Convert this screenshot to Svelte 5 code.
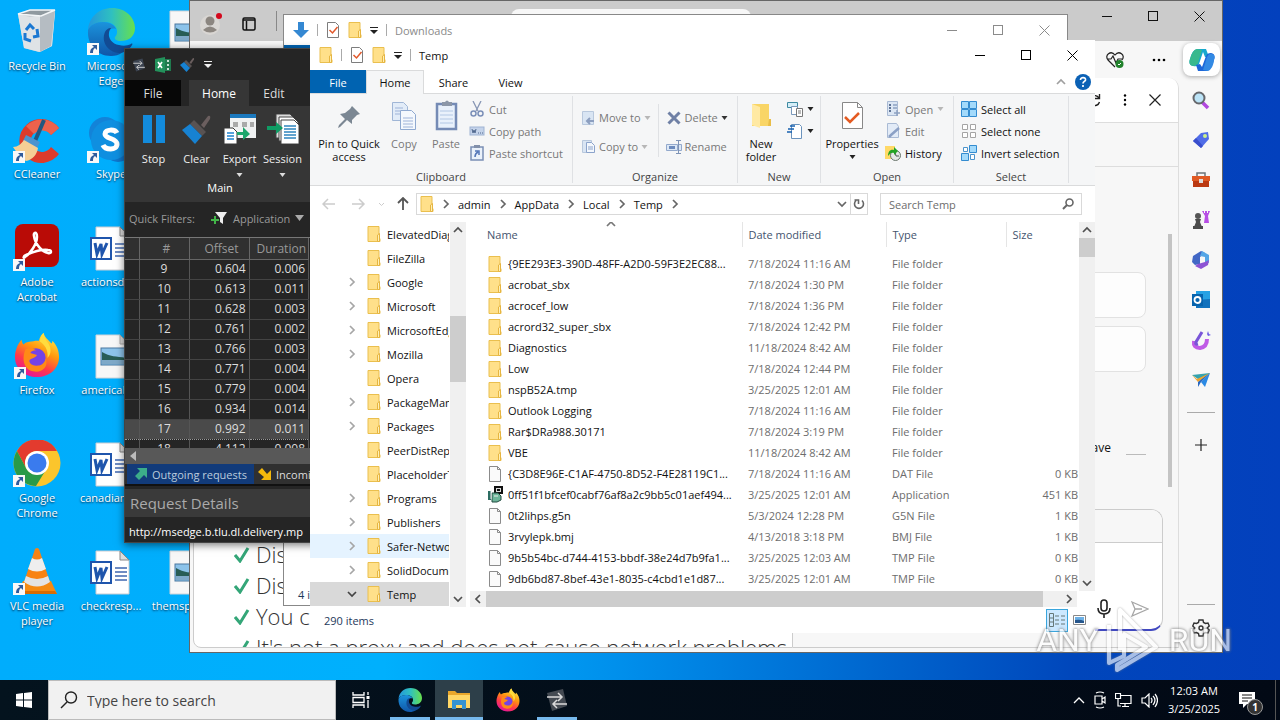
<script>
  const shortcuts = [
    { icon: 'bin', label: 'Recycle Bin', col: 1, row: 1 },
    { icon: 'ccleaner', label: 'CCleaner', col: 1, row: 2, link: true },
    { icon: 'acrobat', label: 'Adobe Acrobat', col: 1, row: 3, link: true },
    { icon: 'firefox', label: 'Firefox', col: 1, row: 4, link: true },
    { icon: 'chrome', label: 'Google Chrome', col: 1, row: 5, link: true },
    { icon: 'vlc', label: 'VLC media player', col: 1, row: 6, link: true },
    { icon: 'edge', label: 'Microsoft Edge', col: 2, row: 1, link: true },
    { icon: 'skype', label: 'Skype', col: 2, row: 2, link: true },
    { icon: 'word', label: 'actionsdis...', col: 2, row: 3 },
    { icon: 'image', label: 'americabl...', col: 2, row: 4 },
    { icon: 'word', label: 'canadiann...', col: 2, row: 5 },
    { icon: 'word', label: 'checkresp...', col: 2, row: 6 },
    { icon: 'image', label: '', col: 3, row: 1 },
    { icon: 'image', label: 'themspons...', col: 3, row: 6 }
  ];

  const requests = [
    [9, '0.604', '0.006'], [10, '0.613', '0.011'], [11, '0.628', '0.003'],
    [12, '0.761', '0.002'], [13, '0.766', '0.003'], [14, '0.771', '0.004'],
    [15, '0.779', '0.004'], [16, '0.934', '0.014'], [17, '0.992', '0.011'],
    [18, '4.112', '0.008']
  ];

  const tree = [
    ['ElevatedDiagnostics', 0], ['FileZilla', 0], ['Google', 1], ['Microsoft', 1],
    ['MicrosoftEdge', 1], ['Mozilla', 1], ['Opera', 0], ['PackageManagement', 1],
    ['Packages', 1], ['PeerDistRepub', 0], ['PlaceholderTile', 0], ['Programs', 1],
    ['Publishers', 1], ['Safer-Networking', 1], ['SolidDocuments', 1], ['Temp', 2]
  ];

  const files = [
    ['folder', '{9EE293E3-390D-48FF-A2D0-59F3E2EC88...', '7/18/2024 11:16 AM', 'File folder', ''],
    ['folder', 'acrobat_sbx', '7/18/2024 1:30 PM', 'File folder', ''],
    ['folder', 'acrocef_low', '7/18/2024 1:36 PM', 'File folder', ''],
    ['folder', 'acrord32_super_sbx', '7/18/2024 12:42 PM', 'File folder', ''],
    ['folder', 'Diagnostics', '11/18/2024 8:42 AM', 'File folder', ''],
    ['folder', 'Low', '7/18/2024 12:44 PM', 'File folder', ''],
    ['folder', 'nspB52A.tmp', '3/25/2025 12:01 AM', 'File folder', ''],
    ['folder', 'Outlook Logging', '7/18/2024 11:16 AM', 'File folder', ''],
    ['folder', 'Rar$DRa988.30171', '7/18/2024 3:19 PM', 'File folder', ''],
    ['folder', 'VBE', '11/18/2024 8:42 AM', 'File folder', ''],
    ['file', '{C3D8E96E-C1AF-4750-8D52-F4E28119C1...', '7/18/2024 11:16 AM', 'DAT File', '0 KB'],
    ['exe', '0ff51f1bfcef0cabf76af8a2c9bb5c01aef494...', '3/25/2025 12:01 AM', 'Application', '451 KB'],
    ['file', '0t2lihps.g5n', '5/3/2024 12:28 PM', 'G5N File', '1 KB'],
    ['file', '3rvylepk.bmj', '4/13/2018 3:18 PM', 'BMJ File', '1 KB'],
    ['file', '9b5b54bc-d744-4153-bbdf-38e24d7b9fa1...', '3/25/2025 12:03 AM', 'TMP File', '0 KB'],
    ['file', '9db6bd87-8bef-43e1-8035-c4cbd1e1d87...', '3/25/2025 12:01 AM', 'TMP File', '0 KB'],
    ['file', '', '', '', '']
  ];

  const crumbs = ['admin', 'AppData', 'Local', 'Temp'];
  const checks = ['Disa', 'Displ', 'You c', "It's not a proxy and does not cause network problems"];
  const sideTools = ['search', 'tag', 'toolbox', 'chess', 'office', 'outlook', 'designer', 'plane'];
</script>

{#snippet edgeLogo(size)}
  <svg width={size} height={size} viewBox="0 0 48 48" aria-hidden="true">
    <defs>
      <linearGradient id="eg1" x1="0" y1="0" x2="1" y2="0"><stop offset="0" stop-color="#2396dd" /><stop offset=".5" stop-color="#2fc0c0" /><stop offset="1" stop-color="#68e04c" /></linearGradient>
      <linearGradient id="eg2" x1="0" y1="0" x2="0" y2="1"><stop offset="0" stop-color="#1b93dc" /><stop offset="1" stop-color="#1056a8" /></linearGradient>
    </defs>
    <path d="M1 22C2 9 12 0 25 0c14 0 23 10 23 20 0 9-7 13-14 13-5 0-7-2-6-4 2-2 2-4 2-6 0-4-4-9-13-9C9 14 2 18 1 22z" fill="url(#eg1)" />
    <path d="M1 22c2-5 8-8 15-8 8 0 12 4 13 7-6-2-12 3-10 11 2 7 9 12 17 12-4 3-8 4-12 4C10 48 0 37 1 22z" fill="url(#eg2)" />
    <path d="M18 24c-4 9 2 20 14 21 6 0 11-4 13-8 1-1 0-2-1-1-4 2-8 2-12 1-7-1-11-7-10-12 0-3 2-4 2-5-3 0-5 2-6 4z" fill="#124b94" />
  </svg>
{/snippet}

{#snippet firefoxLogo(size)}
  <svg width={size} height={size} viewBox="0 0 48 48" aria-hidden="true">
    <defs>
      <linearGradient id="fx" x1=".8" y1="0" x2=".3" y2="1"><stop offset="0" stop-color="#fff04a" /><stop offset=".4" stop-color="#ff980e" /><stop offset=".7" stop-color="#ff3a4a" /><stop offset="1" stop-color="#e4149c" /></linearGradient>
    </defs>
    <path d="M3 16c1-3 3-6 5-8 0 2 1 4 2 5 2-2 5-3 8-3 3-1 6-1 8-1 1-4 3-7 5-8 1 5 5 7 8 11 1-1 1-2 1-3 5 5 7 11 7 17 0 12-10 21-23 21S1 38 1 26c0-4 1-7 2-10z" fill="url(#fx)" />
    <circle cx="23" cy="27" r="10" fill="#7543e5" />
    <path d="M12 18c4-2 8-1 11 1-3 0-5 1-6 3l7 2c-2 4-7 3-8 6 0 3 4 6 9 5 4 0 8-4 8-8 4 10-5 16-13 14-8-1-13-11-8-23z" fill="#ff8a16" />
    <path d="M27 10c5 3 9 9 8 17 4-4 4-10 1-15-3-4-5-7-5-11-2 2-4 5-4 9z" fill="#ffdc3e" />
  </svg>
{/snippet}

{#snippet desktopIcon(name)}
  {#if name === 'edge'}
    {@render edgeLogo(48)}
  {:else if name === 'firefox'}
    {@render firefoxLogo(46)}
  {:else}
    <svg width="48" height="48" viewBox="0 0 48 48" aria-hidden="true">
      {#if name === 'bin'}
        <path d="M5 6 16 2h26l-3 36-13 6-15-4z" fill="#c9d0d5" />
        <path d="m5 6 12 3 25-5-3 34-12 6-16-4z" fill="#dfe3e6" />
        <path d="m27 8 15-5-4 35-11 6z" fill="#b5bcc2" />
        <path d="M5 6 17 2h25L28 8z" fill="#8f999f" stroke="#f2f5f7" stroke-width="1.5" />
        <g fill="none" stroke="#1b78d2" stroke-width="3"><path d="m13 22 4-5 4 4" /><path d="m24 21 1 7-5 1" /><path d="M12 25v6l6 2" /></g>
      {:else if name === 'ccleaner'}
        <path d="M46 12A22 22 0 1 0 46 38l-8-7a11 11 0 1 1 0-12z" fill="#dc3b2c" />
        <path d="M46 12A22 22 0 0 0 13 10l8 8a11 11 0 0 1 17 1z" fill="#ee624c" />
        <path d="m31 4-9 21" stroke="#23577f" stroke-width="4" />
        <path d="m13 19 14 7-3 6-14-7z" fill="#4c94cf" />
        <path d="m11 24 14 8c-1 7-6 12-12 13C7 42 3 35 0 31c5 0 8-3 11-7z" fill="#f5cf95" />
      {:else if name === 'acrobat'}
        <rect x="2" y="0" width="44" height="43" rx="8" fill="#b90b06" />
        <path d="M12 33c5-3 12-13 12-20 0-6-4-5-3-1 1 8 8 16 14 17 4 1 4-3 0-3-7-1-15 2-22 5-3 1-3 4-1 2z" fill="none" stroke="#fff" stroke-width="2.5" />
      {:else if name === 'chrome'}
        <circle cx="24" cy="23" r="23.500" fill="#fbc52c" />
        <path d="M4 11a23 23 0 0 1 40 0H24a12 12 0 0 0-11 17z" fill="#e33b2e" />
        <path d="M4 11a23 23 0 0 0 19 35l11-18a12 12 0 0 1-21 0z" fill="#299a48" />
        <circle cx="24" cy="23" r="12" fill="#fff" /><circle cx="24" cy="23" r="9.500" fill="#3a7bee" />
      {:else if name === 'vlc'}
        <path d="m10 33-6 13h40l-6-13z" fill="#f58a12" /><path d="m4 46 2-3h36l2 3z" fill="#d76c03" />
        <path d="m22 1-11 33q13 9 26 0L26 1q-2-2-4 0z" fill="#f88313" />
        <path d="m19 10-4 11q9 5 18 0l-4-11q-5 3-10 0z" fill="#eee" /><path d="m13 28-2 6q13 9 26 0l-2-6q-11 6-22 0z" fill="#e4e4e4" />
      {:else if name === 'skype'}
        <circle cx="18" cy="17" r="16" fill="#1383d8" /><circle cx="31" cy="31" r="15" fill="#0f76cc" /><circle cx="24" cy="24" r="20" fill="#0f8fe0" />
        <path d="M30 17c-2-4-12-4-12 1s12 4 12 10c0 7-12 6-14 1" fill="none" stroke="#fff" stroke-width="5" />
      {:else if name === 'word'}
        <path d="M9 3h24l9 9v34H9z" fill="#fff" stroke="#c9ccd2" /><path d="M33 3v9h9z" fill="#ddd" stroke="#888" />
        <path d="M28 20h12M28 24h12M28 28h12M28 32h12" stroke="#3f67b0" stroke-width="1.5" />
        <rect x="4" y="14" width="20" height="21" fill="#fff" stroke="#1f55ac" stroke-width="2" />
        <path d="m8 19 2 11 4-10 1 10 5-11" fill="none" stroke="#1f55ac" stroke-width="3" />
      {:else}
        <path d="M9 3h24l9 9v34H9z" fill="#f7f7f7" stroke="#cfd3d8" /><path d="M33 3v9h9z" fill="#ddd" stroke="#aaa" />
        <rect x="14" y="16" width="26" height="17" fill="#8cc3ea" stroke="#4b78a0" />
        <path d="M15 20c8 5 14 4 24 6v6H15z" fill="#285d55" /><path d="M15 28h24v4H15z" fill="#7fa9c8" />
      {/if}
    </svg>
  {/if}
{/snippet}

{#snippet folder()}
  <svg width="14" height="16" viewBox="0 0 14 16" aria-hidden="true"><path d="M1 .5h11v11l1 1.500V15.500H1z" fill="#ffe08a" stroke="#eabf4e" /><path d="M10.500 15.500V9l2-1.500v8z" fill="#fff0b5" stroke="#e6b541" /></svg>
{/snippet}

{#snippet page()}
  <svg width="14" height="16" viewBox="0 0 14 16" aria-hidden="true"><path d="M1.500.5h8l3 3v12h-11z" fill="#fafafa" stroke="#8b8b8b" /><path d="M9.500.5v3h3" fill="none" stroke="#8b8b8b" /></svg>
{/snippet}

{#snippet checkPage()}
  <svg width="14" height="16" viewBox="0 0 14 16" aria-hidden="true"><path d="M1.500.5h8l3 3v12h-11z" fill="#fff" stroke="#7d7d7d" /><path d="m3.500 8 3 3 5-6" fill="none" stroke="#e2582a" stroke-width="1.500" /></svg>
{/snippet}

{#snippet caret(color)}
  <svg width="7" height="4" viewBox="0 0 7 4" aria-hidden="true"><path d="M.5 0h6l-3 4z" fill={color} /></svg>
{/snippet}

{#snippet chev(dir, color)}
  <svg width="10" height="10" viewBox="0 0 10 10" aria-hidden="true">
    <path d={dir === 'r' ? 'm3 1 4 4-4 4' : dir === 'l' ? 'M7 1 3 5l4 4' : dir === 'u' ? 'm1 7 4-4 4 4' : 'm1 3 4 4 4-4'} fill="none" stroke={color} stroke-width="1.700" />
  </svg>
{/snippet}

{#snippet customize(color)}
  <svg width="8" height="7" viewBox="0 0 8 7" aria-hidden="true"><path d="M0 .5h8" stroke={color} /><path d="M0 3h8L4 7z" fill={color} /></svg>
{/snippet}

{#snippet winButtons(color)}
  <div class="winbtns">
    <button aria-label="Minimize"><svg width="11" height="11"><path d="M0 5.500h10" stroke={color} /></svg></button>
    <button aria-label="Maximize"><svg width="11" height="11"><rect x=".5" y=".5" width="9" height="9" fill="none" stroke={color} /></svg></button>
    <button aria-label="Close"><svg width="11" height="11"><path d="m.5.5 10 10m0-10-10 10" stroke={color} /></svg></button>
  </div>
{/snippet}

{#snippet brush(size)}
  <svg width={size} height={size} viewBox="0 0 30 30" aria-hidden="true"><path d="m19 11 7-9q3-1 2 3l-6 9z" fill="#6b5f5f" /><path d="m12 6 12 12-4 4L8 10z" fill="#595353" /><path d="m8 10 12 12-7 8L0 16z" fill="#1782d2" /></svg>
{/snippet}

{#snippet swap(size, bg)}
  <svg width={size} height={size} viewBox="0 0 24 24" aria-hidden="true"><path d="m2 5 16-4 4 17-15 5z" fill={bg} /><path d="M2 9h15m-4-4 4 4-4 4M22 16H8m4-4-4 4 4 4" fill="none" stroke="#dadada" stroke-width="1.500" /></svg>
{/snippet}

{#snippet ribbonIcon(name)}
  <svg width="16" height="16" viewBox="0 0 16 16" aria-hidden="true">
    {#if name === 'cut'}
      <path d="M4 0l5 10M12 0 7 10" stroke="#8796b4" stroke-width="1.300" /><circle cx="4.500" cy="12.500" r="2.500" fill="none" stroke="#7b8fb8" stroke-width="1.500" /><circle cx="11.500" cy="12.500" r="2.500" fill="none" stroke="#7b8fb8" stroke-width="1.500" />
    {:else if name === 'path'}
      <rect x="1" y="4" width="14" height="8" fill="#c4d3ea" stroke="#9fb3d3" /><path d="m3 6 1 4 1-3 1 3 1-4m2 4h1m1 0h1m1 0h1" fill="none" stroke="#51698f" />
    {:else if name === 'shortcut'}
      <path d="M2 2h12v13H2z" fill="#eaf1fa" stroke="#7a8fb5" stroke-width="1.500" /><path d="M5 0h6v3H5z" fill="#8290aa" /><path d="M6 12c0-3 1-4 3-5M6 6h4v4" fill="none" stroke="#5376b8" stroke-width="1.500" />
    {:else if name === 'move'}
      <path d="M2.500 1.500h11v13h-11z" fill="#d9e5f3" stroke="#b8c8dd" /><path d="M14 11H7m3-3-3 3 3 3" fill="none" stroke="#8c9fc0" stroke-width="2" />
    {:else if name === 'copyto'}
      <path d="M2.500 1.500h9v12h-9z" fill="#d9e5f3" stroke="#b8c8dd" /><path d="M6.500 3.500h5l3 3v7h-8z" fill="#f4f8fd" stroke="#8ba3cb" /><path d="M8 8h5M8 10h5" stroke="#8ba3cb" />
    {:else if name === 'delete'}
      <path d="m2.500 2.500 11 11m0-11-11 11" stroke="#6f80a5" stroke-width="3" />
    {:else if name === 'rename'}
      <path d="M.5 5.500h11v6H.5zM13 5.500h2.500v6H13" fill="#dce8f6" stroke="#93a9cc" /><path d="M3 7h6v3H3z" fill="#6d8bbe" /><path d="M10 1.500h5M10 14.500h5M12.500 2v12" stroke="#7e93b6" />
    {:else if name === 'open'}
      <path d="M2.500.5h10v14h-10z" fill="#dbe6f4" stroke="#a9bad4" /><path d="M5 3v2m0 1v2m0 1v2" stroke="#5e7396" stroke-width="2" /><path d="M8 4h4M8 7h4M12 9v6m-3-3h6" stroke="#8da1c1" stroke-width="1.500" />
    {:else if name === 'edit'}
      <path d="M2.500.5h9l2 3v11h-11z" fill="#e2ebf7" stroke="#a9bad4" /><path d="m14 5-8 7-2 2" stroke="#8ba0c5" stroke-width="2.500" />
    {:else if name === 'history'}
      <path d="M0 1h10v13H0z" fill="#ffd967" /><circle cx="10.500" cy="10.500" r="5" fill="#e5e8e5" stroke="#69756c" /><path d="m10 7 1 4h3" fill="none" stroke="#4c5952" /><path d="M3 11c0-4 2-7 6-6V2l4 4-4 4V8c-3-1-4 1-6 3z" fill="#23a423" />
    {:else if name === 'all'}
      <path d="M.5.5h7v7h-7zM8.500.5h7v7h-7zM.5 8.500h7v7h-7zM8.500 8.500h7v7h-7z" fill="#a3dafb" stroke="#348cd0" />
    {:else if name === 'none'}
      <path d="M1.500 1.500h5v5h-5zM9.500 1.500h5v5h-5zM1.500 9.500h5v5h-5zM9.500 9.500h5v5h-5z" fill="#fff" stroke="#a4a4a4" />
    {:else if name === 'invert'}
      <path d="M8.500.5h7v7h-7zM.5 8.500h7v7h-7z" fill="#a3dafb" stroke="#348cd0" /><path d="M2.500 2.500h4v4h-4zM9.500 9.500h4v5h-4z" fill="#fff" stroke="#4b94cc" />
    {:else if name === 'newitem'}
      <path d="M.5 1.500h10v5H.5z" fill="#d5eef8" stroke="#3e8aa1" /><path d="M4.500 5.500h6v8h-6z" fill="#fff" stroke="#7a99bb" /><path d="M9.500 7.500h6v8h-6z" fill="#fff" stroke="#777" /><path d="M11 10h3m-3 2h3" stroke="#777" />
    {:else}
      <path d="M4.500 1.500h8l2 2v12h-10z" fill="#fff" stroke="#6b93bd" /><path d="M3 3h5M1 6h6M0 9h5" stroke="#1660b0" stroke-width="1.500" />
    {/if}
  </svg>
{/snippet}

{#snippet sideIcon(name)}
  <svg width="20" height="20" viewBox="0 0 20 20" aria-hidden="true">
    {#if name === 'search'}
      <path d="m11 12 6 6" stroke="#b148df" stroke-width="3.500" /><circle cx="8" cy="8" r="5.500" fill="#bce4f7" stroke="#66686c" stroke-width="2" />
    {:else if name === 'tag'}
      <path d="m2 11 8-8 7-1 1 7-8 9z" fill="#506de8" /><path d="m2 11 3-3 7 8-2 2z" fill="#394ecc" /><circle cx="14" cy="6" r="2" fill="#cdf08a" />
    {:else if name === 'toolbox'}
      <path d="M6 6V3h8v3" fill="none" stroke="#6c7479" stroke-width="1.500" /><path d="M1 6h18v5H1z" fill="#e05a24" /><path d="M2 11h16v6H2z" fill="#bb3912" /><path d="M8 9h4v4H8z" fill="#ddd" />
    {:else if name === 'chess'}
      <path d="M11 1h2v2h1V1h2v2h1V1h2l-2 5 1 7h-5l1-7z" fill="#b74de5" /><circle cx="7" cy="6" r="3" fill="#555" /><path d="M4 9h6l-1 3 2 5H3l2-5zM2 16h10v3H2z" fill="#4b4b4b" />
    {:else if name === 'office'}
      <path d="m2 6 8-5 4 2-5 4v7l-5 1-3-3z" fill="#4267c5" /><path d="m11 1 7 4v8l-4-1V7L9 6z" fill="#55a6e6" /><path d="m18 10-1 5-7 4-6-3 3-2 7-2z" fill="#8d53d4" />
    {:else if name === 'outlook'}
      <path d="M5 1h14v17H5z" fill="#26a1e4" /><path d="m5 10 14-1v9H5z" fill="#1272bd" /><path d="M1 4h11v12H1z" fill="#0763ad" /><circle cx="6.500" cy="10" r="3" fill="none" stroke="#fff" stroke-width="1.800" />
    {:else if name === 'designer'}
      <path d="M3 11q-1 7 6 7 7-1 7-9" fill="none" stroke="#c05be6" stroke-width="4" /><path d="M11 2 5 12q-1 3 2 2" stroke="#7a55d8" stroke-width="3" fill="none" /><path d="m17 1 1 3 2 1-3 1-1-2z" fill="#705fe5" />
    {:else}
      <path d="m1 5 18-2-9 8z" fill="#35a3ae" /><path d="m1 5 5 4 13-6-12 9z" fill="#efa22f" /><path d="m19 3-5 14-4-5z" fill="#2b8ae4" /><path d="m7 12 12-9-9 9-3 5z" fill="#2868c2" />
    {/if}
  </svg>
{/snippet}

<main class="screen">
  <section class="desktop" aria-label="Desktop">
    <div class="shortcuts">
      {#each shortcuts as s}
        <a href="#open" class="shortcut" aria-label={s.label || 'Picture'} style:grid-column={s.col} style:grid-row={s.row}>
          <span class="pic">
            {@render desktopIcon(s.icon)}
            {#if s.link}
              <svg class="arrow" width="12" height="12" viewBox="0 0 12 12" aria-hidden="true"><path d="M0 0h12v12H0z" fill="#f8f8f8" /><path d="M3 10c0-3 1-5 4-6L5 2h5v5L8 5c-2 1-2 3-2 5z" fill="#2f5b9c" /></svg>
            {/if}
          </span>
          <span>{s.label}</span>
        </a>
      {/each}
    </div>

    <section class="window edge" aria-label="Browser">
      <header class="edge-title">
        <svg width="22" height="22" viewBox="0 0 22 22" aria-hidden="true"><circle cx="10" cy="12" r="10" fill="#d9d6d3" /><circle cx="10" cy="8" r="4.500" fill="#8c8680" /><path d="M3 17q7-7 14 0-7 5-14 0z" fill="#8c8680" /><circle cx="19" cy="3" r="3" fill="#d4081c" /></svg>
        <svg width="14" height="14" viewBox="0 0 14 14" aria-hidden="true"><rect x="1" y="1" width="12" height="12" rx="1.500" fill="none" stroke="#111" stroke-width="1.500" /><path d="M1 3h12M4.500 4v9" stroke="#111" stroke-width="1.500" /></svg>
        <i class="tab-line"></i>
        <div class="edge-tab"></div>
        {@render winButtons('#111')}
      </header>
      <div class="edge-bar">
        <svg width="19" height="18" viewBox="0 0 19 18" aria-hidden="true"><path d="M9 16 2 9C-2 4 5-1 9 4c4-5 11 0 7 5M1 8h4l2-3 3 7 2-4h4" fill="none" stroke="#222" stroke-width="1.200" /><circle cx="13.500" cy="13" r="4" fill="#21822c" /><path d="m12 13 1 1 2-2" stroke="#fff" fill="none" /></svg>
        <svg width="14" height="4" aria-hidden="true"><circle cx="2" cy="2" r="1.300" /><circle cx="7" cy="2" r="1.300" /><circle cx="12" cy="2" r="1.300" /></svg>
        <button class="copilot" aria-label="Copilot">
          <svg width="26" height="24" viewBox="0 0 26 24" aria-hidden="true"><path d="M8 1h9l3 8h-4l-2-5-4 12q-1 3-6 2-5-1-3-7 2-9 7-10z" fill="#17a8cf" /><path d="M1 11Q4 1 8 1l5 1-4 13q-1 3-5 3-5-1-3-7z" fill="#39b98e" /><path d="M18 23H9l-2-6 4-1 2 3 4-11q1-3 5-3 5 1 3 7-2 9-7 11z" fill="#1d67d8" /><path d="M25 12q-1 9-6 11l-5-1 4-13q2-4 5-3 4 1 2 6z" fill="#338ae4" /></svg>
        </button>
      </div>
      <div class="edge-body">
        <div class="webpage">
          <ul>
            {#each checks as c}
              <li><svg width="16" height="16" viewBox="0 0 16 16" aria-hidden="true"><path d="m1 8 5 6L14 1" fill="none" stroke="#34a678" stroke-width="3" /></svg>{c}</li>
            {/each}
          </ul>
        </div>
        <aside class="panel">
          <div class="panel-head">
            <svg width="13" height="13" viewBox="0 0 13 13" aria-hidden="true"><path d="M11 4A5 5 0 1 0 11.500 8M11.500 0v4.500H7" fill="none" stroke="#222" stroke-width="1.400" /></svg>
            <svg width="4" height="12" aria-hidden="true"><circle cx="2" cy="1.500" r="1.200" /><circle cx="2" cy="6" r="1.200" /><circle cx="2" cy="10.500" r="1.200" /></svg>
            <svg width="12" height="12" aria-hidden="true"><path d="m.5.5 11 11m0-11-11 11" stroke="#222" stroke-width="1.200" /></svg>
          </div>
          <div class="panel-band"></div>
          <div class="panel-main">
            <div class="card"></div>
            <div class="card"></div>
            <p>save <i></i></p>
            <div class="compose">
              <div class="compose-top"></div>
              <div class="compose-row">
                <svg width="14" height="20" viewBox="0 0 14 20" aria-hidden="true"><rect x="4" y="1" width="6" height="11" rx="3" fill="none" stroke="#222" stroke-width="1.600" /><path d="M1 9q0 6 6 6t6-6M7 15v4" fill="none" stroke="#222" stroke-width="1.600" /></svg>
                <svg width="18" height="16" viewBox="0 0 18 16" aria-hidden="true"><path d="m1 1 16 7-16 7 3-7zM4 8h7" fill="none" stroke="#a6a6a6" stroke-width="1.300" /></svg>
              </div>
            </div>
            <i class="panel-scroll"></i>
          </div>
        </aside>
        <nav class="side" aria-label="Sidebar">
          {#each sideTools as t}
            <button aria-label={t}>{@render sideIcon(t)}</button>
          {/each}
          <hr />
          <button aria-label="Add"><svg width="12" height="12" aria-hidden="true"><path d="M6 0v12M0 6h12" stroke="#222" stroke-width="1.200" /></svg></button>
          <hr class="push" />
          <button aria-label="Settings"><svg width="18" height="18" viewBox="0 0 18 18" aria-hidden="true"><path d="m7 1-.5 2.500L4.500 4.500 2 4 .8 7l2 2-2 2L2 14l2.500-.5 2 1L7 17h4l.5-2.500 2-1L16 14l1.200-3-2-2 2-2L16 4l-2.500.5-2-1L11 1z" fill="none" stroke="#333" stroke-width="1.400" /><circle cx="9" cy="9" r="2" fill="none" stroke="#333" stroke-width="1.400" /></svg></button>
        </nav>
      </div>
    </section>

    <section class="window downloads" aria-label="Downloads">
      <header class="titlebar">
        <svg width="16" height="18" viewBox="0 0 16 18" aria-hidden="true"><path d="M5 1h6v8h5l-8 8-8-8h5z" fill="#3488d2" /></svg>
        <i></i>{@render checkPage()}{@render folder()}{@render customize('#222')}<i></i>
        <span>Downloads</span>
        {@render winButtons('#8b8b8b')}
      </header>
      <div class="dl-file"></div>
      <footer>4 i</footer>
    </section>

    <section class="window debugger" aria-label="HTTP Debugger">
      <header class="dbg-title">
        {@render swap(14, '#3b4350')}
        <svg width="16" height="16" viewBox="0 0 16 16" aria-hidden="true"><path d="M0 2 10 0v16L0 14z" fill="#23915b" /><path d="M10 2h6v12h-6z" fill="#207a4e" /><path d="m3 5 4 6m0-6-4 6M12 4h2m-2 4h2m-2 4h2" stroke="#fff" stroke-width="1.600" /></svg>
        {@render brush(15)}
        {@render customize('#eee')}
      </header>
      <nav class="dbg-tabs"><button class="file">File</button><button class="on">Home</button><button>Edit</button></nav>
      <div class="dbg-ribbon">
        <div class="dbg-tools">
          <button><svg width="30" height="30" aria-hidden="true"><path d="M4 1h9v28H4zM17 1h9v28h-9z" fill="#138bdc" /></svg>Stop</button>
          <button>{@render brush(30)}Clear</button>
          <button><svg width="32" height="30" viewBox="0 0 32 30" aria-hidden="true"><path d="M6 0h26v24H6z" fill="#f0f1f2" /><path d="M6 0h26v4H6z" fill="#1b78bd" /><path d="M9 8h5v5H9zm9 0h5v5h-5zm8 0h4v5h-4z" fill="#aaa" /><path d="M0 14h9l4 4v12H0z" fill="#fff" stroke="#363636" /><path d="M3 19h7M3 22h7M3 25h7" stroke="#1f82cf" stroke-width="1.500" /><path d="M13 18h6v-5l7 7-7 6v-5h-6z" fill="#1ca66b" /></svg>Export{@render caret('#ddd')}</button>
          <button><svg width="32" height="30" viewBox="0 0 32 30" aria-hidden="true"><path d="M9 0h14l6 6v18H9z" fill="#ddd" stroke="#444" /><path d="M12 3h14l5 5v19H12z" fill="#fff" stroke="#444" /><path d="M14 6h13l5 5v19H14z" fill="#fff" stroke="#444" /><path d="M17 12h12M17 15h12M17 18h12M17 21h12M17 24h12" stroke="#2f85bf" stroke-width="1.500" /><path d="M0 12h9V8l7 6-7 6v-4H0z" fill="#0f9c64" /></svg>Session{@render caret('#ddd')}</button>
        </div>
        <p>Main</p>
      </div>
      <div class="dbg-filter"><span>Quick Filters:</span><svg width="17" height="14" viewBox="0 0 17 14" aria-hidden="true"><path d="M4 1h12l-4 6v6l-3-2V7z" fill="#eee" /><path d="M0 9h8M4 5v8" stroke="#42b548" stroke-width="2" /></svg><span>Application</span><svg width="9" height="6" aria-hidden="true"><path d="M0 0h9L4.500 6z" fill="#aaa" /></svg></div>
      <div class="dbg-scroll">
        <table class="dbg-table">
          <thead><tr><th aria-label="Marker"></th><th>#</th><th>Offset</th><th>Duration</th></tr></thead>
          <tbody>
            {#each requests as r}
              <tr class:sel={r[0] === 17}><td></td><td>{r[0]}</td><td>{r[1]}</td><td>{r[2]}</td></tr>
            {/each}
          </tbody>
        </table>
      </div>
      <div class="dbg-hscroll"><svg width="6" height="10" aria-hidden="true"><path d="M6 0v10L0 5z" fill="#bbb" /></svg></div>
      <div class="dbg-bottom-tabs">
        <button class="on"><svg width="13" height="12" viewBox="0 0 13 12" aria-hidden="true"><path d="M3 0h10v10L10 7l-5 5-4-4 5-5z" fill="#3cad89" /></svg>Outgoing requests</button>
        <button><svg width="13" height="12" viewBox="0 0 13 12" aria-hidden="true"><path d="M13 12H3l3-3-6-5 4-4 5 6 4-4z" fill="#f5b90c" /></svg>Incoming</button>
      </div>
      <h2>Request Details</h2>
      <p class="url">http://msedge.b.tlu.dl.delivery.mp</p>
    </section>

    <section class="window explorer" aria-label="Temp">
      <header class="titlebar">
        {@render folder()}<i></i>{@render checkPage()}{@render folder()}{@render customize('#222')}<i></i>
        <span>Temp</span>
        {@render winButtons('#000')}
      </header>
      <nav class="tabs">
        <button class="file">File</button><button class="on">Home</button><button>Share</button><button>View</button>
        <span class="tabs-end">{@render chev('u', '#a0a0a0')}
          <svg width="16" height="16" viewBox="0 0 16 16" aria-label="Help"><circle cx="8" cy="8" r="8" fill="#0b61b5" /><path d="M5.500 6c0-3.500 5.500-3 5 0-.3 1.500-2.500 1.500-2.500 3.500M8 11v2" fill="none" stroke="#fff" stroke-width="1.700" /></svg>
        </span>
      </nav>
      <div class="ribbon">
        <div class="group">
          <div class="tools">
            <button class="big pin"><svg width="32" height="32" viewBox="0 0 32 32" aria-hidden="true"><path d="m19 6 8 8-3 1-5 5v4l-5-4-7 7-2 1 1-3 6-6-5-5 5-1 5-4z" fill="#7b8793" /></svg>Pin to Quick access</button>
            <button class="big off copy"><svg width="32" height="32" viewBox="0 0 32 32" aria-hidden="true"><path d="M4.500 2.500h11l4 4v14h-15z" fill="#e2ecf8" stroke="#a0b6d6" /><path d="M12.500 10.500h11l4 4v15h-15z" fill="#f4f8fd" stroke="#8fa9d0" /><path d="M7 8h8M7 11h5M7 14h5M15 18h10M15 21h10M15 24h10M15 27h10" stroke="#9eb3d8" /></svg>Copy</button>
            <button class="big off paste"><svg width="32" height="32" viewBox="0 0 32 32" aria-hidden="true"><path d="M7 4h19v25H7z" fill="#e9f1fb" stroke="#758bb5" stroke-width="2.500" /><path d="M12 2h3q2-3 4 0h3v4H12z" fill="#8c97a8" /><path d="M10 11h13M10 15h13M10 19h13M10 23h13" stroke="#b2c7e4" /></svg>Paste</button>
            <div class="stack off">
              <button>{@render ribbonIcon('cut')}Cut</button><button>{@render ribbonIcon('path')}Copy path</button><button>{@render ribbonIcon('shortcut')}Paste shortcut</button>
            </div>
          </div>
          <p>Clipboard</p>
        </div>
        <div class="group">
          <div class="tools organize off">
            <div class="stack wide"><button>{@render ribbonIcon('move')}Move to {@render caret('#b7b7b7')}</button><button>{@render ribbonIcon('copyto')}Copy to {@render caret('#b7b7b7')}</button></div>
            <i class="rule"></i>
            <div class="stack wide"><button>{@render ribbonIcon('delete')}Delete {@render caret('#333')}</button><button>{@render ribbonIcon('rename')}Rename</button></div>
          </div>
          <p>Organize</p>
        </div>
        <div class="group">
          <div class="tools">
            <button class="big newf"><svg width="32" height="32" viewBox="0 0 32 32" aria-hidden="true"><path d="M7 4h17v22H7z" fill="#f9d566" /><path d="m7 4 8 3v21l-8-3z" fill="#ffe9a3" /><path d="M24 19h2v7h-3z" fill="#e9bd47" /></svg>New folder</button>
            <div class="stack"><button aria-label="New item">{@render ribbonIcon('newitem')}{@render caret('#222')}</button><button aria-label="Easy access">{@render ribbonIcon('easy')}{@render caret('#222')}</button></div>
          </div>
          <p>New</p>
        </div>
        <div class="group">
          <div class="tools">
            <button class="big props"><svg width="32" height="32" viewBox="0 0 32 32" aria-hidden="true"><path d="M6.500 2.500h15l5 5v21h-20z" fill="#fff" stroke="#888" /><path d="M21.500 2.500v5h5" fill="none" stroke="#888" /><path d="m9 17 5 5 9-9" fill="none" stroke="#e45b22" stroke-width="2.500" /></svg>Properties{@render caret('#222')}</button>
            <div class="stack">
              <button class="off">{@render ribbonIcon('open')}Open {@render caret('#b7b7b7')}</button><button class="off">{@render ribbonIcon('edit')}Edit</button><button>{@render ribbonIcon('history')}History</button>
            </div>
          </div>
          <p>Open</p>
        </div>
        <div class="group">
          <div class="tools select">
            <div class="stack"><button>{@render ribbonIcon('all')}Select all</button><button>{@render ribbonIcon('none')}Select none</button><button>{@render ribbonIcon('invert')}Invert selection</button></div>
          </div>
          <p>Select</p>
        </div>
      </div>
      <div class="address">
        <div class="navs">
          <svg width="14" height="12" aria-label="Back"><path d="M13 6H1m5-5L1 6l5 5" fill="none" stroke="#ccc" stroke-width="1.500" /></svg>
          <svg width="14" height="12" aria-label="Forward"><path d="M0 6h12M7 1l5 5-5 5" fill="none" stroke="#ccc" stroke-width="1.500" /></svg>
          <svg width="7" height="5" aria-hidden="true"><path d="m1 1 2.500 2.500L6 1" fill="none" stroke="#ccc" /></svg>
          <svg width="12" height="14" aria-label="Up"><path d="M6 13V1M1 6l5-5 5 5" fill="none" stroke="#555" stroke-width="1.800" /></svg>
        </div>
        <div class="crumbs">
          {@render folder()}
          {#each crumbs as c}<span class="sep">{@render chev('r', '#666')}</span><span>{c}</span>{/each}
          <span class="sep">{@render chev('r', '#666')}</span>
          <span class="drop">{@render chev('d', '#666')}</span>
          <button aria-label="Refresh"><svg width="12" height="12" viewBox="0 0 12 12" aria-hidden="true"><path d="M9 2.500A4.500 4.500 0 1 1 3 2.500M1.500 2h4v4" fill="none" stroke="#666" stroke-width="1.600" /></svg></button>
        </div>
        <label class="find"><input type="text" aria-label="Search Temp" placeholder="Search Temp" /><svg width="12" height="12" viewBox="0 0 12 12" aria-hidden="true"><circle cx="7.500" cy="4.500" r="3.500" fill="none" stroke="#666" stroke-width="1.600" /><path d="M5 7 1 11" stroke="#666" stroke-width="2" /></svg></label>
      </div>
      <div class="main">
        <ul class="tree">
          {#each tree as t}
            <li class:hover={t[0] === 'Safer-Networking'} class:current={t[1] === 2}>
              <span class="tw">{#if t[1] === 1}{@render chev('r', '#a6a6a6')}{:else if t[1] === 2}{@render chev('d', '#444')}{/if}</span>
              {@render folder()}<span>{t[0]}</span>
            </li>
          {/each}
        </ul>
        <div class="vscroll nav-scroll"><span>{@render chev('u', '#505050')}</span><i></i><span>{@render chev('d', '#505050')}</span></div>
        <div class="content">
          <div class="list">
            <div class="rows">
              <table>
                <thead><tr><th>Name<span class="sort">{@render chev('u', '#777')}</span></th><th>Date modified</th><th>Type</th><th>Size</th></tr></thead>
                <tbody>
                  {#each files as f}
                    <tr>
                      <td><span class="fname">
                        {#if f[0] === 'folder'}{@render folder()}{:else if f[0] === 'file'}{@render page()}{:else}
                          <svg width="16" height="17" viewBox="0 0 16 17" aria-hidden="true"><path d="M6 0h9v8H6z" fill="#111" /><path d="M8 2h5v4H8z" fill="#ddd" /><path d="M9 3h3v2H9z" fill="#111" /><path d="M0 5h3v9H0z" fill="#2c6d62" /><path d="M4 7h6l3 3v4l-4 2H4z" fill="#6eb59a" stroke="#234d42" /><path d="M3 4v9M6 10h4" stroke="#eee" /></svg>
                        {/if}{f[1]}</span></td>
                      <td>{f[2]}</td><td>{f[3]}</td><td>{f[4]}</td>
                    </tr>
                  {/each}
                </tbody>
              </table>
            </div>
            <div class="vscroll list-scroll"><span>{@render chev('u', '#505050')}</span><i></i><span>{@render chev('d', '#505050')}</span></div>
          </div>
          <div class="hscroll"><span>{@render chev('l', '#505050')}</span><i></i><span>{@render chev('r', '#505050')}</span></div>
        </div>
      </div>
      <footer class="status"><span>290 items</span>
        <button class="view on" aria-label="Details view"><svg width="18" height="14" viewBox="0 0 18 14" aria-hidden="true"><path d="M1.500.5h4v13h-4zM2 5h3M2 9h3M7 3h4m2 0h4M7 7h4m2 0h4M7 11h4m2 0h4" fill="none" stroke="#677" /></svg></button>
        <button class="view" aria-label="Thumbnail view"><svg width="13" height="10" viewBox="0 0 13 10" aria-hidden="true"><path d="M.5.5h12v9H.5z" fill="#fff" stroke="#888" /><path d="M2 2h9v6H2z" fill="#6db1e7" /><path d="M2 5q5-1 9 1v2H2z" fill="#26568c" /></svg></button>
      </footer>
    </section>

    <div class="mark"><span>ANY</span>
      <svg width="56" height="66" viewBox="0 0 56 66" aria-hidden="true"><path d="M3 18v38l15-7V27l22 13-29 18v5l39-23L14 3v40" fill="none" stroke="#fff" stroke-width="4" stroke-linejoin="round" /></svg>
      <span>RUN</span>
    </div>
  </section>

  <footer class="taskbar">
    <button class="start" aria-label="Start"><svg width="16" height="16" viewBox="0 0 16 16" aria-hidden="true"><path d="m0 2 7-1v6.500H0zM8 1l8-1v7.500H8zM0 8.500h7V15l-7-1zM8 8.500h8V16l-8-1z" fill="#fff" /></svg></button>
    <label class="search"><svg width="18" height="18" viewBox="0 0 18 18" aria-hidden="true"><circle cx="11" cy="6.500" r="5.500" fill="none" stroke="#222" stroke-width="1.400" /><path d="m7 11-6 6" stroke="#222" stroke-width="1.400" /></svg><input type="text" aria-label="Type here to search" placeholder="Type here to search" /></label>
    <button class="app" aria-label="Task view"><svg width="18" height="16" viewBox="0 0 18 16" aria-hidden="true"><path d="M1 0v3h11V0M1 5.500h11v5H1zM1 16v-3h11v3M16 0v3m0 5v8" fill="none" stroke="#fff" stroke-width="1.300" /><path d="M14.500 4h3v3h-3z" fill="#fff" /></svg></button>
    <button class="app run" aria-label="Edge">{@render edgeLogo(24)}</button>
    <button class="app run active" aria-label="File Explorer"><svg width="22" height="20" viewBox="0 0 22 20" aria-hidden="true"><path d="M0 1h7l2 2h13v15H0z" fill="#e9a72c" /><path d="M0 5h22v13H0z" fill="#ffd766" /><path d="M4 10h14v9h-4v-4H8v4H4z" fill="#3593d2" /></svg></button>
    <button class="app" aria-label="Firefox">{@render firefoxLogo(24)}</button>
    <button class="app run" aria-label="HTTP Debugger">{@render swap(24, '#444a52')}</button>
    <div class="tray">
      <svg width="12" height="8" aria-hidden="true"><path d="m1 7 5-5 5 5" fill="none" stroke="#fff" stroke-width="1.300" /></svg>
      <svg width="12" height="18" viewBox="0 0 12 18" aria-hidden="true"><path d="M1 5h7v8H1zM8 8l3-2v6l-3-2M2 2q4-2 8 0M2 16q4 2 8 0" fill="none" stroke="#fff" stroke-width="1.200" /></svg>
      <svg width="17" height="15" viewBox="0 0 17 15" aria-hidden="true"><path d="M5 2.500h11v8H5M10 11v3M7 13.500h7M.5.5h5v5h-5zM3 6v7h3" fill="none" stroke="#fff" stroke-width="1.200" /></svg>
      <svg width="17" height="15" viewBox="0 0 17 15" aria-hidden="true"><path d="M1 5h3l4-4v13l-4-4H1zM10 5q2 2 0 5M12 3q4 4 0 9M14 1q5 6 0 13" fill="none" stroke="#fff" stroke-width="1.200" /></svg>
      <div class="clock"><span>12:03 AM</span><span>3/25/2025</span></div>
      <div class="note"><svg width="16" height="16" viewBox="0 0 16 16" aria-hidden="true"><path d="M0 0h16v12H8l-4 4v-4H0z" fill="#fff" /><path d="M3 3h10M3 6h10M3 9h6" stroke="#111" /></svg><b>1</b></div>
    </div>
  </footer>
</main>

<style>
  :global(body) { margin: 0; }
  * { box-sizing: border-box; }
  .screen { height: 100vh; display: flex; flex-direction: column; font: 11px/15px "Open Sans", "Noto Sans", sans-serif; color: #111; overflow: hidden; }
  svg { display: block; flex: none; }
  button { font: inherit; color: inherit; background: none; border: 0; padding: 0; margin: 0; display: flex; align-items: center; justify-content: center; }
  input { font: inherit; border: 0; background: none; outline: 0; padding: 0; min-width: 0; flex: 1; }
  p, h2, ul { margin: 0; padding: 0; list-style: none; }
  table { border-collapse: collapse; table-layout: fixed; }
  th, td { padding: 0; font-weight: 400; text-align: left; white-space: nowrap; }

  .desktop { position: relative; flex: 1; overflow: hidden; background: linear-gradient(90deg, #00adfc 0%, #00b0fd 30%, #0090ec 48%, #0067cf 68%, #0046bb 84%, #0340bd 100%); }
  .shortcuts { display: grid; grid-template-columns: repeat(3, 74px); grid-auto-rows: 108px; }
  .shortcut { display: flex; flex-direction: column; align-items: center; gap: 2px; padding-top: 8px; color: #fff; text-align: center; text-decoration: none; text-shadow: 0 1px 2px #024; }
  .pic { position: relative; height: 48px; }
  .arrow { position: absolute; left: 0; bottom: 1px; }

  .window { position: absolute; display: flex; flex-direction: column; overflow: hidden; }
  .winbtns { display: flex; margin-left: auto; }
  .winbtns button { width: 46px; height: 30px; }

  .edge { left: 189px; top: 0; right: 57px; bottom: 27px; background: #f7f7f7; border: 1px solid #666; }
  .edge-title { height: 40px; background: #cbcbcb; display: flex; align-items: center; gap: 20px; padding-left: 10px; flex: none; }
  .edge-title > svg { margin-top: 6px; }
  .tab-line { width: 1px; height: 20px; background: #888; }
  .edge-tab { align-self: flex-end; width: 240px; height: 32px; margin-left: 214px; border-radius: 8px 8px 0 0; background: #f7f7f7; }
  .edge-title .winbtns { align-self: flex-start; }
  .edge-bar { height: 37px; flex: none; display: flex; justify-content: flex-end; align-items: center; gap: 27px; padding-right: 2px; }
  .copilot { width: 37px; height: 33px; border-radius: 8px; background: #fff; box-shadow: 0 1px 4px #aaa; margin-left: -10px; }
  .edge-body { flex: 1; display: flex; min-height: 0; padding-bottom: 4px; }
  .webpage { width: 600px; margin-left: 3px; background: #fff; border: 1px solid #ccc; border-radius: 0 0 0 8px; overflow: hidden; display: flex; flex-direction: column; justify-content: flex-end; }
  .webpage ul { margin-bottom: -16px; font-size: 22px; line-height: 31px; color: #333; font-weight: 300; }
  .webpage li { display: flex; align-items: center; gap: 6px; padding-left: 40px; white-space: nowrap; }
  .panel { flex: 1; display: flex; flex-direction: column; border-right: 1px solid #ddd; border-bottom: 1px solid #ccc; border-radius: 0 10px 0 0; background: #f7f7f7; overflow: hidden; }
  .panel-head { height: 45px; background: #fff; display: flex; justify-content: flex-end; align-items: center; gap: 22px; padding-right: 17px; border-bottom: 1px solid #ddd; }
  .panel-band { height: 44px; border-bottom: 1px solid #ddd; }
  .panel-main { position: relative; flex: 1; display: flex; flex-direction: column; padding: 105px 15px 16px 0; }
  .card { height: 46px; margin: 0 17px 8px 0; flex: none; background: #fdfdfd; border: 1px solid #e2e2e2; border-radius: 8px; }
  .panel-main p { display: flex; justify-content: flex-end; align-items: center; gap: 15px; margin: 58px 17px 0 0; font-size: 12px; line-height: 20px; }
  .panel-main p i { width: 20px; height: 1px; background: #bbb; margin-top: 12px; }
  .compose { margin-top: auto; height: 122px; flex: none; border: 1px solid #ccc; border-bottom: 2px solid #4048c0; border-radius: 12px; background: #fff; overflow: hidden; display: flex; flex-direction: column; justify-content: space-between; }
  .compose-top { height: 33px; background: #f7f7f7; border-bottom: 1px solid #ccc; }
  .compose-row { display: flex; justify-content: flex-end; gap: 20px; padding: 0 13px 10px; align-items: center; }
  .panel-scroll { position: absolute; right: 6px; top: 67px; width: 4px; height: 253px; background: #c4c4c4; }
  .side { width: 43px; display: flex; flex-direction: column; align-items: center; padding-top: 2px; }
  .side button { width: 40px; height: 40px; flex: none; }
  .side hr { width: 28px; height: 1px; border: 0; margin: 12px 0; background: #aaa; flex: none; }
  .side .push { margin: auto 0 3px; }

  .titlebar { height: 30px; flex: none; display: flex; align-items: center; gap: 8px; padding-left: 9px; }
  .titlebar i { width: 1px; height: 12px; background: #aaa; }
  .titlebar .winbtns { align-self: flex-start; }
  .downloads { left: 283px; top: 14px; right: 212px; bottom: 74px; background: #fff; border: 1px solid #888; }
  .downloads .titlebar span { color: #8a8a8a; }
  .dl-file { width: 56px; height: 24px; background: #0063b1; }
  .downloads footer { margin-top: auto; padding: 0 14px 3px; color: #1e395b; }

  .debugger { left: 124px; top: 48px; width: 220px; bottom: 137px; background: #252525; color: #ddd; border: 1px solid #444; box-shadow: 0 2px 8px #0008; }
  .dbg-title { height: 31px; flex: none; display: flex; align-items: center; gap: 9px; padding: 0 7px; }
  .dbg-tabs { display: flex; height: 26px; flex: none; font-size: 12px; }
  .dbg-tabs button { width: 50px; }
  .dbg-tabs .file { width: 56px; background: #070707; margin-right: 8px; }
  .dbg-tabs .on { width: 60px; background: #363636; color: #fff; }
  .dbg-ribbon { height: 96px; flex: none; background: #363636; }
  .dbg-tools { display: flex; height: 74px; padding-left: 7px; }
  .dbg-tools button { width: 43px; flex-direction: column; justify-content: flex-start; gap: 7px; padding-top: 8px; color: #eee; }
  .dbg-ribbon p { width: 190px; text-align: center; color: #fff; }
  .dbg-filter { height: 32px; flex: none; display: flex; align-items: center; gap: 5px; padding-left: 4px; margin-bottom: 3px; color: #999; }
  .dbg-filter svg:nth-of-type(1) { margin-left: 11px; }
  .dbg-filter svg:nth-of-type(2) { margin-left: 0; }
  .dbg-scroll { flex: 1; min-height: 0; overflow: hidden; border-top: 1px solid #777; font-size: 12px; }
  .dbg-table { width: 184px; }
  .dbg-table th { height: 21px; padding-left: 5px; background: #303030; color: #999; border-right: 1px solid #666; border-bottom: 1px solid #666; text-align: center; }
  .dbg-table td { height: 20px; line-height: 18px; text-align: right; padding-right: 3px; border-right: 1px solid #555; border-bottom: 1px solid #444; }
  .dbg-table td:nth-child(2) { text-align: center; padding: 0; }
  .dbg-table th:nth-child(1) { width: 14px; }
  .dbg-table th:nth-child(2) { width: 50px; }
  .dbg-table th:nth-child(3) { width: 60px; }
  .sel td { background: #4a4a4a; border-top: 1px dotted #999; border-bottom: 1px dotted #999; }
  .dbg-hscroll { height: 16px; flex: none; background: #585858; display: flex; align-items: center; padding-left: 5px; }
  .dbg-bottom-tabs { height: 22px; flex: none; display: flex; background: #303030; border-bottom: 2px solid #111; white-space: nowrap; }
  .dbg-bottom-tabs button { gap: 5px; padding: 0 4px; }
  .dbg-bottom-tabs .on { width: 127px; margin-left: 2px; background: #123b7a; color: #bcd; }
  .debugger h2 { flex: none; margin-top: 3px; padding-left: 5px; font-size: 15px; line-height: 28px; font-weight: 400; color: #aaa; background: #3a3a3a; }
  .url { flex: none; line-height: 20px; padding: 5px 0 0 4px; color: #fff; white-space: nowrap; }

  .explorer { left: 310px; top: 40px; right: 185px; bottom: 47px; background: #fff; }
  .tabs { height: 23px; flex: none; display: flex; }
  .tabs button { width: 57px; height: 24px; }
  .tabs .file { width: 56px; background: #0063b1; color: #fff; }
  .tabs .on { width: 58px; background: #f5f6f7; border: 1px solid #dadbdc; border-bottom: 0; z-index: 1; }
  .tabs button:nth-child(3) { margin-left: 1px; }
  .tabs-end { margin-left: auto; display: flex; align-items: center; gap: 9px; padding-right: 4px; }
  .ribbon { height: 93px; flex: none; display: grid; grid-template-columns: 263px 165px 83px 133px 115px; background: #f5f6f7; border: solid #dadbdc; border-width: 1px 0; }
  .group { display: flex; flex-direction: column; border-right: 1px solid #dfe1e4; margin: 2px 0; }
  .group p { text-align: center; color: #444; line-height: 12px; }
  .tools { flex: 1; display: flex; min-height: 0; }
  .big { flex-direction: column; justify-content: flex-start; gap: 5px; padding-top: 4px; line-height: 13px; }
  .big, .stack { align-self: flex-start; }
  .off { color: #787878; }
  .pin { width: 78px; }
  .copy { width: 32px; margin-right: 10px; }
  .paste { width: 32px; }
  .stack { display: flex; flex-direction: column; padding-top: 2px; }
  .tools > .stack:not(.wide) { margin-left: 7px; }
  .stack button { height: 22px; gap: 4px; justify-content: flex-start; white-space: nowrap; }
  .stack.wide { padding: 7px 0 0 7px; }
  .stack.wide button { height: 29px; gap: 3px; }
  .rule { width: 1px; background: #dfe1e4; margin: 8px 0 14px 7px; }
  .newf { width: 46px; }
  .props { width: 62px; }
  .tools > .newf + .stack { margin-left: 3px; }
  .tools > .props + .stack { margin-left: 2px; }
  .address { height: 36px; flex: none; display: flex; align-items: center; padding: 0 13px 0 12px; }
  .navs { display: flex; align-items: center; gap: 12px; width: 94px; }
  .navs svg:first-child { margin-right: 4px; }
  .crumbs { flex: 1; height: 22px; display: flex; align-items: center; border: 1px solid #d9d9d9; padding-left: 3px; }
  .sep { width: 24px; display: flex; justify-content: center; }
  .drop { margin-left: auto; padding-right: 3px; }
  .crumbs button { width: 17px; height: 20px; border-left: 1px solid #d9d9d9; }
  .find { width: 202px; height: 22px; margin-left: 12px; display: flex; align-items: center; border: 1px solid #d9d9d9; padding: 0 7px 0 8px; }
  .find input::placeholder { color: #6d6d6d; opacity: 1; }
  .main { flex: 1; min-height: 0; display: flex; }
  .tree { width: 139px; overflow: hidden; }
  .tree li { height: 24px; display: flex; align-items: center; white-space: nowrap; }
  .tree li > span:last-child { margin-left: 6px; }
  .tree .tw { width: 20px; margin-left: 37px; flex: none; }
  .tree .hover { background: #e5f3ff; }
  .tree .current { background: #d9d9d9; }
  .vscroll { width: 16px; background: #f0f0f0; display: flex; flex-direction: column; }
  .vscroll span, .hscroll span { width: 16px; height: 16px; flex: none; display: grid; place-items: center; }
  .vscroll i, .hscroll i { background: #cdcdcd; }
  .vscroll span:last-child { margin-top: auto; }
  .nav-scroll { margin-left: 1px; }
  .nav-scroll i { height: 66px; margin-top: 78px; }
  .list-scroll i { height: 19px; }
  .content { flex: 1; min-width: 0; display: flex; flex-direction: column; padding-left: 1px; }
  .list { flex: 1; min-height: 0; display: flex; }
  .rows { flex: 1; overflow: hidden; }
  .rows table { width: 100%; }
  .rows th { height: 25px; color: #44546e; padding-left: 6px; border-right: 1px solid #e5e5e5; position: relative; }
  .rows th:nth-child(1) { width: 275px; padding-left: 20px; }
  .rows th:nth-child(2) { width: 144px; }
  .rows th:nth-child(3) { width: 120px; }
  .rows th:last-child { border: 0; }
  .rows tbody::before { content: ""; display: block; height: 6px; }
  .sort { position: absolute; left: 139px; top: -3px; }
  .rows td { height: 21px; padding-left: 6px; color: #6d6d6d; }
  .rows td:first-child { padding-left: 21px; color: #111; }
  .rows td:last-child { text-align: right; padding-right: 1px; }
  .fname { display: flex; align-items: center; gap: 6px; }
  .fname svg[width="16"] { margin-right: -2px; }
  .hscroll { height: 16px; flex: none; display: flex; background: #f0f0f0; margin: 0 18px 0 3px; }
  .hscroll i { flex: 1; margin-right: 18px; }
  .status { height: 26px; flex: none; display: flex; align-items: center; padding: 0 5px 0 14px; color: #1e395b; }
  .view { width: 22px; height: 23px; }
  .view.on { margin-left: auto; background: #cce8ff; border: 1px solid #39a5dc; }

  .mark { position: absolute; right: 48px; bottom: 7px; display: flex; align-items: center; gap: 7px; color: #fff; opacity: .65; font: 32px/40px Roboto, "Open Sans", sans-serif; text-shadow: 0 0 3px #777; filter: drop-shadow(0 0 1px #888); }

  .taskbar { height: 40px; flex: none; display: flex; background: linear-gradient(90deg, #04131e, #020915); color: #fff; }
  .start { width: 48px; }
  .search { width: 288px; background: #f1f1f1; border: 1px solid #bbb; display: flex; align-items: center; gap: 9px; padding-left: 11px; margin-right: 1px; }
  .search input { font-size: 14px; }
  .search input::placeholder { color: #444; opacity: 1; }
  .app { width: 48px; border: solid transparent; border-width: 3px 0; margin-right: 1px; }
  .run { width: 40px; margin: 0 5px 0 4px; border-bottom-color: #76b9ed; }
  .active { width: 48px; margin: 0 1px 0 0; background: #2d3f49; border-top-color: #2d3f49; }
  .tray { margin-left: auto; display: flex; align-items: center; gap: 9px; padding-right: 4px; }
  .clock { display: flex; flex-direction: column; text-align: center; line-height: 18px; width: 54px; }
  .note { position: relative; display: flex; width: 46px; height: 40px; align-items: center; padding-left: 9px; border-right: 1px solid #555; }
  .note b { position: absolute; left: 17px; top: 19px; width: 16px; height: 16px; border: 1px solid #999; border-radius: 50%; background: #333; font-size: 10px; line-height: 14px; text-align: center; }
</style>
